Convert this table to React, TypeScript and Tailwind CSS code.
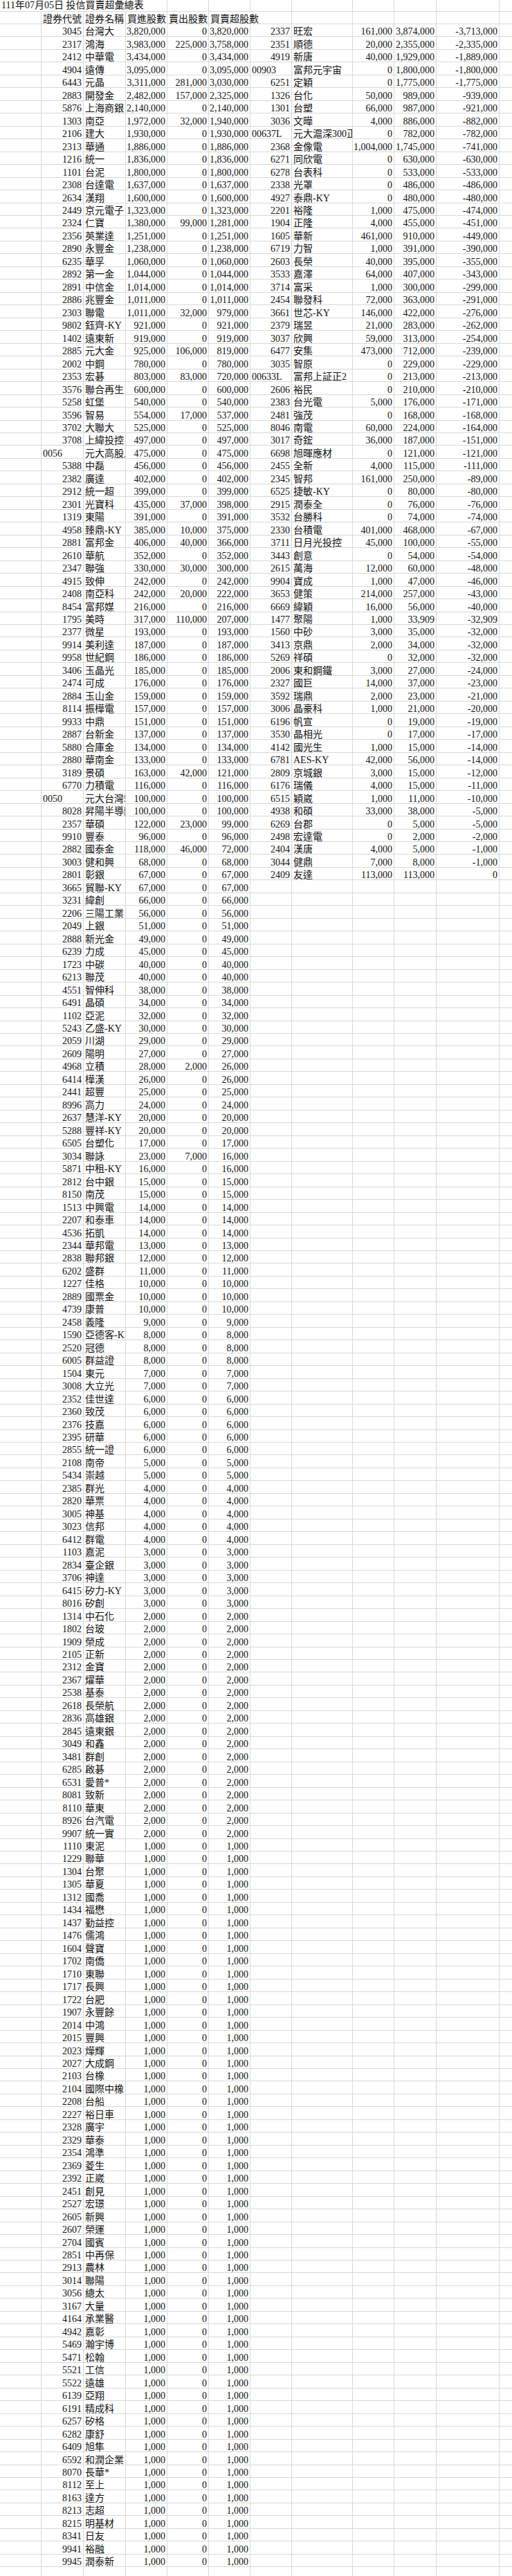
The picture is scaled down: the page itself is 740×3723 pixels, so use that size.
import type { ReactNode } from 'react';

// 左半部：買超（代號 名稱 買進 賣出）
const LEFT_RAW = `3045 台灣大 3820000 0
2317 鴻海 3983000 225000
2412 中華電 3434000 0
4904 遠傳 3095000 0
6443 元晶 3311000 281000
2883 開發金 2482000 157000
5876 上海商銀 2140000 0
1303 南亞 1972000 32000
2106 建大 1930000 0
2313 華通 1886000 0
1216 統一 1836000 0
1101 台泥 1800000 0
2308 台達電 1637000 0
2634 漢翔 1600000 0
2449 京元電子 1323000 0
2324 仁寶 1380000 99000
2356 英業達 1251000 0
2890 永豐金 1238000 0
6235 華孚 1060000 0
2892 第一金 1044000 0
2891 中信金 1014000 0
2886 兆豐金 1011000 0
2303 聯電 1011000 32000
9802 鈺齊-KY 921000 0
1402 遠東新 919000 0
2885 元大金 925000 106000
2002 中鋼 780000 0
2353 宏碁 803000 83000
3576 聯合再生 600000 0
5258 虹堡 540000 0
3596 智易 554000 17000
3702 大聯大 525000 0
3708 上緯投控 497000 0
0056 元大高股息 475000 0
5388 中磊 456000 0
2382 廣達 402000 0
2912 統一超 399000 0
2301 光寶科 435000 37000
1319 東陽 391000 0
4958 臻鼎-KY 385000 10000
2881 富邦金 406000 40000
2610 華航 352000 0
2347 聯強 330000 30000
4915 致伸 242000 0
2408 南亞科 242000 20000
8454 富邦媒 216000 0
1795 美時 317000 110000
2377 微星 193000 0
9914 美利達 187000 0
9958 世紀鋼 186000 0
3406 玉晶光 185000 0
2474 可成 176000 0
2884 玉山金 159000 0
8114 振樺電 157000 0
9933 中鼎 151000 0
2887 台新金 137000 0
5880 合庫金 134000 0
2880 華南金 133000 0
3189 景碩 163000 42000
6770 力積電 116000 0
0050 元大台灣50 100000 0
8028 昇陽半導體 100000 0
2357 華碩 122000 23000
9910 豐泰 96000 0
2882 國泰金 118000 46000
3003 健和興 68000 0
2801 彰銀 67000 0
3665 貿聯-KY 67000 0
3231 緯創 66000 0
2206 三陽工業 56000 0
2049 上銀 51000 0
2888 新光金 49000 0
6239 力成 45000 0
1723 中碳 40000 0
6213 聯茂 40000 0
4551 智伸科 38000 0
6491 晶碩 34000 0
1102 亞泥 32000 0
5243 乙盛-KY 30000 0
2059 川湖 29000 0
2609 陽明 27000 0
4968 立積 28000 2000
6414 樺漢 26000 0
2441 超豐 25000 0
8996 高力 24000 0
2637 慧洋-KY 20000 0
5288 豐祥-KY 20000 0
6505 台塑化 17000 0
3034 聯詠 23000 7000
5871 中租-KY 16000 0
2812 台中銀 15000 0
8150 南茂 15000 0
1513 中興電 14000 0
2207 和泰車 14000 0
4536 拓凱 14000 0
2344 華邦電 13000 0
2838 聯邦銀 12000 0
6202 盛群 11000 0
1227 佳格 10000 0
2889 國票金 10000 0
4739 康普 10000 0
2458 義隆 9000 0
1590 亞德客-KY 8000 0
2520 冠德 8000 0
6005 群益證 8000 0
1504 東元 7000 0
3008 大立光 7000 0
2352 佳世達 6000 0
2360 致茂 6000 0
2376 技嘉 6000 0
2395 研華 6000 0
2855 統一證 6000 0
2108 南帝 5000 0
5434 崇越 5000 0
2385 群光 4000 0
2820 華票 4000 0
3005 神基 4000 0
3023 信邦 4000 0
6412 群電 4000 0
1103 嘉泥 3000 0
2834 臺企銀 3000 0
3706 神達 3000 0
6415 矽力-KY 3000 0
8016 矽創 3000 0`;

const TWO_K = `1314 中石化,1802 台玻,1909 榮成,2105 正新,2312 金寶,2367 燿華,2538 基泰,2618 長榮航,2836 高雄銀,2845 遠東銀,3049 和鑫,3481 群創,6285 啟碁,6531 愛普*,8081 致新,8110 華東,8926 台汽電,9907 統一實`;

const ONE_K = `1110 東泥,1229 聯華,1304 台聚,1305 華夏,1312 國喬,1434 福懋,1437 勤益控,1476 儒鴻,1604 聲寶,1702 南僑,1710 東聯,1717 長興,1722 台肥,1907 永豐餘,2014 中鴻,2015 豐興,2023 燁輝,2027 大成鋼,2103 台橡,2104 國際中橡,2208 台船,2227 裕日車,2328 廣宇,2329 華泰,2354 鴻準,2369 菱生,2392 正崴,2451 創見,2527 宏璟,2605 新興,2607 榮運,2704 國賓,2851 中再保,2913 農林,3014 聯陽,3056 總太,3167 大量,4164 承業醫,4942 嘉彰,5469 瀚宇博,5471 松翰,5521 工信,5522 遠雄,6139 亞翔,6191 精成科,6257 矽格,6282 康舒,6409 旭隼,6592 和潤企業,8070 長華*,8112 至上,8163 達方,8213 志超,8215 明基材,8341 日友,9941 裕融,9945 潤泰新`;

// 右半部：賣超
const RIGHT_RAW = `2337 旺宏 161000 3874000
2351 順德 20000 2355000
4919 新唐 40000 1929000
00903 富邦元宇宙 0 1800000
6251 定穎 0 1775000
1326 台化 50000 989000
1301 台塑 66000 987000
3036 文曄 4000 886000
00637L 元大滬深300正2 0 782000
2368 金像電 1004000 1745000
6271 同欣電 0 630000
6278 台表科 0 533000
2338 光罩 0 486000
4927 泰鼎-KY 0 480000
2201 裕隆 1000 475000
1904 正隆 4000 455000
1605 華新 461000 910000
6719 力智 1000 391000
2603 長榮 40000 395000
3533 嘉澤 64000 407000
3714 富采 1000 300000
2454 聯發科 72000 363000
3661 世芯-KY 146000 422000
2379 瑞昱 21000 283000
3037 欣興 59000 313000
6477 安集 473000 712000
3035 智原 0 229000
00633L 富邦上証正2 0 213000
2606 裕民 0 210000
2383 台光電 5000 176000
2481 強茂 0 168000
8046 南電 60000 224000
3017 奇鋐 36000 187000
6698 旭暉應材 0 121000
2455 全新 4000 115000
2345 智邦 161000 250000
6525 捷敏-KY 0 80000
2915 潤泰全 0 76000
3532 台勝科 0 74000
2330 台積電 401000 468000
3711 日月光投控 45000 100000
3443 創意 0 54000
2615 萬海 12000 60000
9904 寶成 1000 47000
3653 健策 214000 257000
6669 緯穎 16000 56000
1477 聚陽 1000 33909
1560 中砂 3000 35000
3413 京鼎 2000 34000
5269 祥碩 0 32000
2006 東和鋼鐵 3000 27000
2327 國巨 14000 37000
3592 瑞鼎 2000 23000
3006 晶豪科 1000 21000
6196 帆宣 0 19000
3530 晶相光 0 17000
4142 國光生 1000 15000
6781 AES-KY 42000 56000
2809 京城銀 3000 15000
6176 瑞儀 4000 15000
6515 穎崴 1000 11000
4938 和碩 33000 38000
6269 台郡 0 5000
2498 宏達電 0 2000
2404 漢唐 4000 5000
3044 健鼎 7000 8000
2409 友達 113000 113000`;

type Row = { code: string; name: string; buy: number; sell: number };

function parse(raw: string): Row[] {
  return raw
    .trim()
    .split('\n')
    .map((l) => {
      const [code, name, buy, sell] = l.trim().split(/\s+/);
      return { code, name, buy: Number(buy), sell: Number(sell) };
    });
}

function group(list: string, buy: number): Row[] {
  return list.split(',').map((s) => {
    const [code, name] = s.split(' ');
    return { code, name, buy, sell: 0 };
  });
}

const LEFT: Row[] = [...parse(LEFT_RAW), ...group(TWO_K, 2000), ...group(ONE_K, 1000)];
const RIGHT: Row[] = parse(RIGHT_RAW);

const fmt = (n: number) => n.toLocaleString('en-US');

const LINE = 'border-[#d9d9d9]';

function Cell({ w, left, children }: { w: string; left?: boolean; children?: ReactNode }) {
  return (
    <div
      className={`${w} shrink-0 h-full border-r border-[#d9d9d9] flex items-end overflow-hidden whitespace-nowrap leading-[12px] ${
        left ? 'justify-start pl-[2px]' : 'justify-end pr-[2px]'
      }`}
    >
      {children}
    </div>
  );
}

function Side({ row, wide }: { row?: Row; wide?: boolean }) {
  // 代號開頭為 0 的是文字格（ETF），靠左
  const textCode = row ? row.code.startsWith('0') : false;
  return (
    <>
      <Cell w={wide ? 'w-[60px]' : 'w-[61px]'} left={textCode}>
        {row?.code}
      </Cell>
      <Cell w={wide ? 'w-[88px]' : 'w-[61px]'} left>
        {row?.name}
      </Cell>
      <Cell w="w-[60px]">{row ? fmt(row.buy) : ''}</Cell>
      <Cell w={wide ? 'w-[61px]' : 'w-[60px]'}>{row ? fmt(row.sell) : ''}</Cell>
      <Cell w={wide ? 'w-[91px]' : 'w-[60px]'}>{row ? fmt(row.buy - row.sell) : ''}</Cell>
    </>
  );
}

export default function App() {
  const rows = Array.from({ length: 201 }, (_, i) => i);

  return (
    <div className="w-[740px] bg-white text-[14px] text-[#111] font-['Liberation_Serif','Noto_Sans_CJK_TC',serif]">
      <div className={`flex h-[16.7px] border-b ${LINE}`}>
        <div className="w-[242px] shrink-0 h-full border-r border-[#d9d9d9] flex items-end pb-[2px] px-[2px] leading-[12px] whitespace-nowrap">
          111年07月05日 投信買賣超彙總表
        </div>
        <Cell w="w-[60px]" />
        <Cell w="w-[60px]" />
        <Cell w="w-[60px]" />
        <Cell w="w-[88px]" />
        <Cell w="w-[60px]" />
        <Cell w="w-[61px]" />
        <Cell w="w-[91px]" />
        <div className="flex-1" />
      </div>

      <div className={`flex h-[18.3px] border-b ${LINE}`}>
        <Cell w="w-[60px]" />
        <Cell w="w-[61px]" left>
          證券代號
        </Cell>
        <Cell w="w-[61px]" left>
          證券名稱
        </Cell>
        <Cell w="w-[60px]" left>
          買進股數
        </Cell>
        <Cell w="w-[60px]" left>
          賣出股數
        </Cell>
        <Cell w="w-[120px]" left>
          買賣超股數
        </Cell>
        <Cell w="w-[88px]" />
        <Cell w="w-[60px]" />
        <Cell w="w-[61px]" />
        <Cell w="w-[91px]" />
        <div className="flex-1" />
      </div>

      {rows.map((i) => (
        <div key={i} className={`flex h-[18.48px] border-b ${LINE}`}>
          <Cell w="w-[60px]" />
          <Side row={LEFT[i]} />
          <Side row={RIGHT[i]} wide />
          <div className="flex-1" />
        </div>
      ))}
    </div>
  );
}
